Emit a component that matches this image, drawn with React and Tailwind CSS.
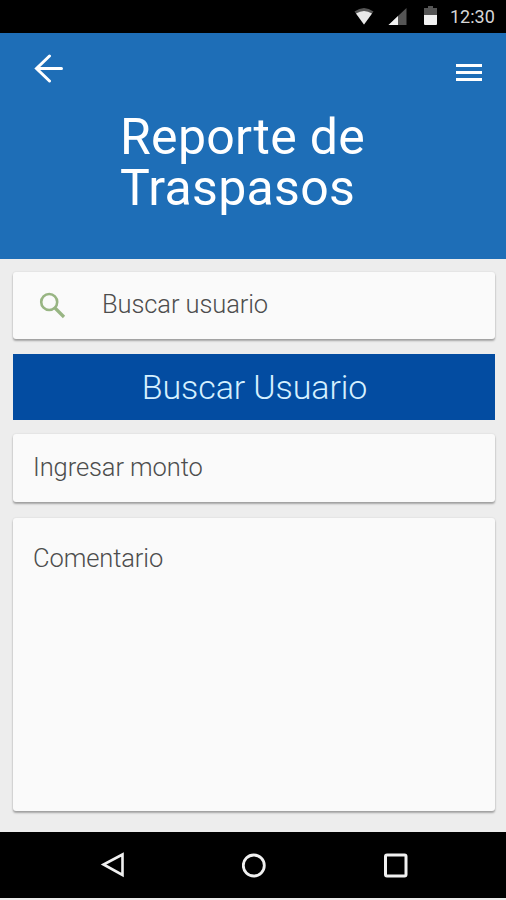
const card = 'rounded-[3px] bg-[#fafafa] shadow-[0_2px_2px_rgba(0,0,0,0.3),0_0_2px_rgba(0,0,0,0.12)]';
const label = 'text-[25.5px] leading-[30px] font-light tracking-[-0.1px] text-[#4d4d4d] whitespace-nowrap';

function StatusBar() {
  return (
    <div className="flex h-[33px] items-start bg-black pl-[354px] text-[#d6d6d6]">
      <svg className="mt-[7px] h-[18px] w-[20px]" viewBox="0 0 20 18">
        <path d="M0.5 4.5Q10 -2.5 19.5 4.5L10 17.5Z" fill="#555" />
        <path d="M2 6.5Q10 1.5 18 6.5L10 17.5Z" fill="#e8e8e8" />
      </svg>
      <svg className="mt-[7px] ml-[14px] h-[19px] w-[19px]" viewBox="0 0 19 19">
        <path d="M0.5 18L18.5 1V18Z" fill="#555" />
        <path d="M0.5 18L10 9V18Z" fill="#f2f2f2" />
      </svg>
      <svg className="mt-[6px] ml-[17px] h-[20px] w-[13px]" viewBox="0 0 13 20">
        <path d="M4 0h5v2h4v8H0V2h4Z" fill="#555" />
        <path d="M0 9h13v9q0 1-1 1H1q-1 0-1-1Z" fill="#f2f2f2" />
      </svg>
      <span className="mt-[5px] ml-[13px] text-[18px] leading-[24px] whitespace-nowrap">12:30</span>
    </div>
  );
}

function Header() {
  return (
    <header className="h-[226px] bg-[#1e6eb7] text-white">
      <div className="flex items-start justify-between pt-[20px] pr-[24px] pl-[34px]">
        <svg
          className="h-[30px] w-[30px]"
          viewBox="0 0 30 30"
          fill="none"
          stroke="currentColor"
          strokeWidth="3"
          strokeLinecap="round"
        >
          <path d="M27.5 15.5H3M15.5 3L2.5 15.5L15.5 28" />
        </svg>
        <div className="mt-[11px] flex w-[26px] flex-col gap-[4px]">
          <span className="h-[3px] bg-white" />
          <span className="h-[3px] bg-white" />
          <span className="h-[3px] bg-white" />
        </div>
      </div>
      <h1 className="mt-[29px] ml-[120px] text-[50px] leading-[51px] font-normal tracking-[0.3px] whitespace-nowrap">
        Reporte de
        <br />
        Traspasos
      </h1>
    </header>
  );
}

function NavBar() {
  return (
    <nav className="flex h-[66px] items-center justify-between bg-black pr-[97px] pl-[100px] text-[#f0f0f0]">
      <svg className="h-[28px] w-[26px]" viewBox="0 0 26 28" fill="none" stroke="currentColor" strokeWidth="2.6">
        <path d="M22.5 3.5V24L3.5 13.5Z" />
      </svg>
      <svg className="h-[26px] w-[26px]" viewBox="0 0 26 26" fill="none" stroke="currentColor" strokeWidth="2.8">
        <circle cx="11.8" cy="13.5" r="10.5" />
      </svg>
      <svg className="h-[26px] w-[26px]" viewBox="0 0 26 26" fill="none" stroke="currentColor" strokeWidth="3">
        <rect x="2.5" y="3" width="20.5" height="21" rx="1.5" />
      </svg>
    </nav>
  );
}

export default function App() {
  return (
    <div className="flex h-[900px] w-[506px] flex-col overflow-hidden bg-[#ededed] font-[Roboto,sans-serif]">
      <StatusBar />
      <Header />
      <main className="flex h-[573px] flex-col pt-[13px] pr-[11px] pl-[13px]">
        <div className={`${card} flex h-[67px] items-center`}>
          <svg className="ml-[26px] h-[27px] w-[27px]" viewBox="0 0 27 27" fill="none" stroke="#98b583" strokeWidth="2.6">
            <circle cx="10.2" cy="10" r="8" />
            <path d="M15.5 15.5L25 25" strokeWidth="3.2" />
          </svg>
          <span className={`${label} mb-[3px] ml-[36px]`}>Buscar usuario</span>
        </div>
        <button className="mt-[15px] h-[66px] bg-[#034ca1] pl-[1px] text-[34px] leading-[40px] font-light tracking-[-0.1px] text-[#d5f0ff]">
          Buscar Usuario
        </button>
        <div className={`${card} mt-[14px] flex h-[68px] items-center pl-[20px]`}>
          <span className={`${label} mb-[2px]`}>Ingresar monto</span>
        </div>
        <div className={`${card} mt-[16px] h-[293px] pt-[25px] pl-[20px]`}>
          <span className={label}>Comentario</span>
        </div>
      </main>
      <NavBar />
    </div>
  );
}
